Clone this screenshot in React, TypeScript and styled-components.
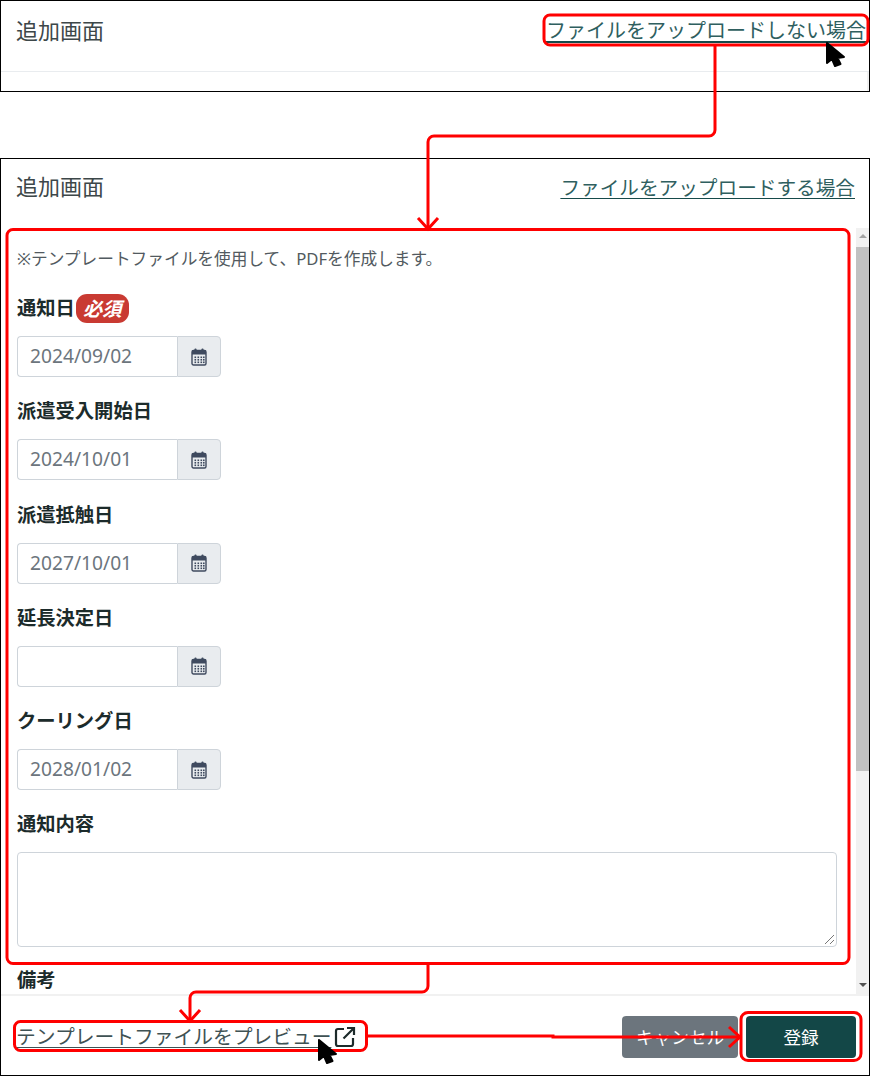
import React from "react";
import styled, { createGlobalStyle } from "styled-components";

const Global = createGlobalStyle`
  html, body { margin: 0; padding: 0; background: #fff; }
  body { font-family: "Noto Sans", "Noto Sans CJK JP", sans-serif; color: #212529; }
  * { box-sizing: border-box; }
`;

const Page = styled.div`
  position: relative;
  width: 870px;
  height: 1076px;
  overflow: hidden;
`;

const TopPanel = styled.section`
  height: 92px;
  margin-bottom: 66px;
  border: 1px solid #000;
  display: flex;
  flex-direction: column;
`;

const MainPanel = styled.section`
  height: 918px;
  border: 1px solid #000;
  display: flex;
  flex-direction: column;
`;

const Header = styled.header<{ $h: number; $pr: number }>`
  height: ${(p) => p.$h}px;
  flex: none;
  display: flex;
  justify-content: space-between;
  align-items: flex-start;
  padding: 12px ${(p) => p.$pr}px 0 15px;
`;

const TopHeader = styled(Header)`
  border-bottom: 1px solid #e9ecef;
  padding-top: 13px;
`;

const TopRest = styled.div`
  flex: 1;
  border-right: 2px solid #f1f1f1;
`;

const Title = styled.h1<{ $lift: number }>`
  margin: -${(p) => p.$lift}px 0 0;
  font-size: 22px;
  font-weight: 400;
  line-height: 34px;
  color: #3d4749;
`;

const HeadLink = styled.a<{ $size: number }>`
  font-size: ${(p) => p.$size}px;
  line-height: 34px;
  color: #2f5f5f;
  text-decoration: underline;
  text-decoration-color: #164a4a;
  text-underline-offset: 3px;
`;

const Main = styled.div`
  flex: 1;
  min-height: 0;
  display: flex;
`;

const Form = styled.div`
  flex: 1;
  min-width: 0;
  overflow: hidden;
  padding: 16px 19px 0 16px;
`;

const Note = styled.p`
  margin: 0 0 18px;
  font-size: 16.7px;
  line-height: 30px;
  color: #525a60;
`;

const Field = styled.div`
  margin-bottom: 18.3px;
`;

const Label = styled.label`
  display: flex;
  align-items: center;
  height: 30px;
  margin-bottom: 14px;
  font-size: 19.3px;
  font-weight: 700;
  color: #1c2b2b;
`;

const Badge = styled.span`
  width: 53px;
  height: 29px;
  margin: 2px 0 0 1px;
  border-radius: 11px;
  background: #c93a32;
  color: #fff;
  display: inline-flex;
  align-items: center;
  justify-content: center;
  font-size: 19.3px;
  font-style: italic;
  font-weight: 700;
`;

const InputGroup = styled.div`
  display: flex;
  width: 204px;
  height: 41px;
`;

const DateInput = styled.div`
  flex: 1;
  border: 1px solid #ced4da;
  border-right: 0;
  border-radius: 4px 0 0 4px;
  padding-left: 12px;
  font-size: 19.2px;
  line-height: 37px;
  color: #6c757d;
  background: #fff;
`;

const Addon = styled.div`
  width: 44px;
  border: 1px solid #ced4da;
  border-radius: 0 4px 4px 0;
  background: #e9ecef;
  display: flex;
  align-items: center;
  justify-content: center;
`;

const TextArea = styled.div`
  position: relative;
  width: 820px;
  height: 95px;
  margin: 3px 0 17px;
  border: 1px solid #ced4da;
  border-radius: 4px;
  background: #fff;
`;

const Grip = styled.svg`
  position: absolute;
  right: 1px;
  bottom: 1px;
`;

const Scrollbar = styled.div`
  width: 13px;
  flex: none;
  background: #f1f1f1;
  display: flex;
  flex-direction: column;
  align-items: center;
  padding-top: 19px;
`;

const Thumb = styled.div`
  width: 100%;
  height: 524px;
  background: #c1c1c1;
`;

const Track = styled.div`
  flex: 1;
`;

const ArrowDown = styled.div`
  width: 0;
  height: 0;
  margin-bottom: 7px;
  border-left: 4px solid transparent;
  border-right: 4px solid transparent;
  border-top: 4px solid #505050;
`;

const ArrowUp = styled(ArrowDown)`
  position: absolute;
  margin: 0;
  top: 234px;
  border-top: 0;
  border-bottom: 4px solid #a3a3a3;
`;

const Footer = styled.footer`
  height: 81px;
  flex: none;
  border-top: 2px solid #f1f1f1;
  display: flex;
  align-items: center;
  justify-content: space-between;
  padding: 2px 13px 0 15px;
`;

const PreviewLink = styled.a`
  display: flex;
  align-items: center;
  gap: 3px;
  font-size: 19.75px;
  line-height: 30px;
  color: #3f5254;
  text-decoration: underline;
  text-underline-offset: 3px;
`;

const Actions = styled.div`
  display: flex;
  gap: 8px;
`;

const Button = styled.button<{ $primary?: boolean }>`
  width: ${(p) => (p.$primary ? 110 : 116)}px;
  height: 42px;
  border: 0;
  border-radius: 4px;
  padding: 0;
  font-family: inherit;
  font-size: 17.6px;
  color: #fff;
  background: ${(p) => (p.$primary ? "#134747" : "#6c757d")};
`;

const Overlay = styled.svg`
  position: absolute;
  inset: 0;
  pointer-events: none;
`;

const CalendarIcon = () => (
  <svg width="16" height="18" viewBox="0 0 16 18" fill="none">
    <rect x="1" y="2.5" width="14" height="14.5" rx="1.5" fill="#e9ecef" stroke="#3f4a5f" strokeWidth="1.4" />
    <rect x="1" y="2.5" width="14" height="4" fill="#3f4a5f" />
    <rect x="3.5" y="0.5" width="2" height="3.5" rx="0.8" fill="#3f4a5f" />
    <rect x="10.5" y="0.5" width="2" height="3.5" rx="0.8" fill="#3f4a5f" />
    {[8.5, 11, 13.5].map((y) =>
      [3.5, 6.5, 9.5, 12].map((x) => <rect key={`${x}-${y}`} x={x} y={y} width="1.6" height="1.6" fill="#3f4a5f" />)
    )}
  </svg>
);

const ExternalIcon = () => (
  <svg width="22" height="22" viewBox="0 0 22 22" fill="none" stroke="#1d2b2b" strokeWidth="2.2">
    <path d="M10 3H4a2 2 0 0 0-2 2v13a2 2 0 0 0 2 2h13a2 2 0 0 0 2-2v-6" />
    <path d="M13 2h7v7M20 2 9.5 12.5" />
  </svg>
);

const Cursor = ({ x, y }: { x: number; y: number }) => (
  <path
    transform={`translate(${x} ${y})`}
    d="M0 0 L0 20 L5 16 L8 23 L13.5 21 L10.5 15 L17 14 Z"
    fill="#000"
    stroke="#000"
    strokeWidth="2"
    strokeLinejoin="round"
  />
);

const dates = [
  { label: "通知日", value: "2024/09/02", required: true },
  { label: "派遣受入開始日", value: "2024/10/01" },
  { label: "派遣抵触日", value: "2027/10/01" },
  { label: "延長決定日", value: "" },
  { label: "クーリング日", value: "2028/01/02" },
];

export default function App() {
  return (
    <Page>
      <Global />
      <TopPanel>
        <TopHeader $h={71} $pr={3}>
          <Title $lift={1}>追加画面</Title>
          <HeadLink $size={20}>ファイルをアップロードしない場合</HeadLink>
        </TopHeader>
        <TopRest />
      </TopPanel>
      <MainPanel>
        <Header $h={69} $pr={14}>
          <Title $lift={2}>追加画面</Title>
          <HeadLink $size={19.65}>ファイルをアップロードする場合</HeadLink>
        </Header>
        <Main>
          <Form>
            <Note>※テンプレートファイルを使用して、PDFを作成します。</Note>
            {dates.map((d) => (
              <Field key={d.label}>
                <Label>
                  {d.label}
                  {d.required && <Badge>必須</Badge>}
                </Label>
                <InputGroup>
                  <DateInput>{d.value}</DateInput>
                  <Addon>
                    <CalendarIcon />
                  </Addon>
                </InputGroup>
              </Field>
            ))}
            <Label>通知内容</Label>
            <TextArea>
              <Grip width="11" height="11" viewBox="0 0 11 11" stroke="#777" strokeWidth="1">
                <path d="M1 10 10 1M6 10l4-4" />
              </Grip>
            </TextArea>
            <Label>備考</Label>
          </Form>
          <Scrollbar>
            <ArrowUp />
            <Thumb />
            <Track />
            <ArrowDown />
          </Scrollbar>
        </Main>
        <Footer>
          <PreviewLink>
            テンプレートファイルをプレビュー
            <ExternalIcon />
          </PreviewLink>
          <Actions>
            <Button>キャンセル</Button>
            <Button $primary>登録</Button>
          </Actions>
        </Footer>
      </MainPanel>
      <Overlay width="870" height="1076" viewBox="0 0 870 1076" fill="none" stroke="#f00" strokeWidth="3">
        <rect x="544" y="15" width="324" height="30" rx="6" />
        <path d="M715 45V130a6 6 0 0 1-6 6H434a6 6 0 0 0-6 6V228" />
        <path d="M418 218 428 229 438 218" />
        <rect x="7" y="229.5" width="842" height="734" rx="6" />
        <path d="M428 964V986a6 6 0 0 1-6 6H196a6 6 0 0 0-6 6V1021" />
        <path d="M180 1010 190 1021 200 1010" />
        <rect x="14.5" y="1021.5" width="352" height="29" rx="6" />
        <path d="M367 1036H553V1037H739" />
        <path d="M729 1027 740 1037 729 1047" />
        <rect x="741" y="1012.5" width="120" height="48" rx="7" />
        <Cursor x={827} y={43} />
        <Cursor x={319} y={1040} />
      </Overlay>
    </Page>
  );
}
